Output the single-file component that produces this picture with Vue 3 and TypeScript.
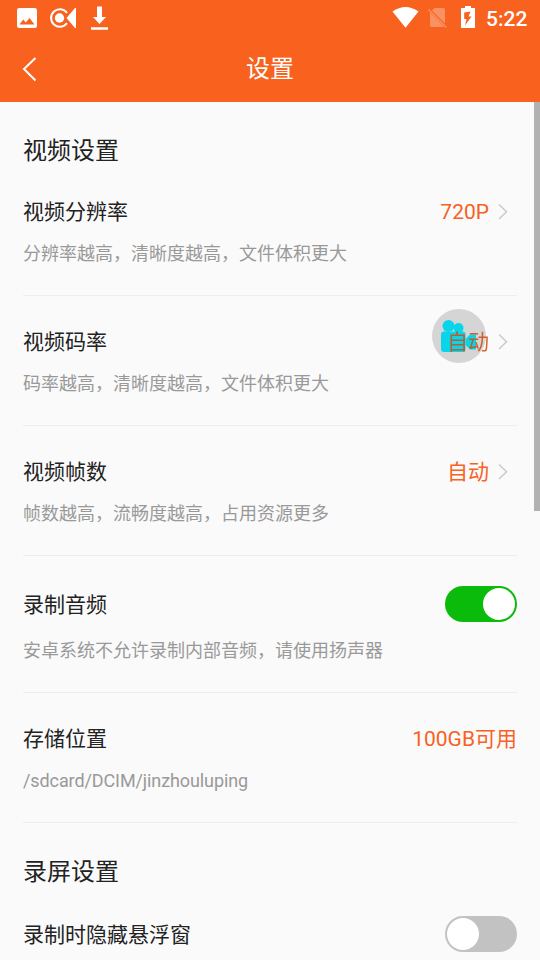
<script setup lang="ts">
interface Row {
  label: string
  hint?: string
  value?: string
  arrow?: boolean
  on?: boolean
  covered?: boolean
  path?: boolean
}
interface Section {
  title: string
  rows: Row[]
}

const sections: Section[] = [
  {
    title: '视频设置',
    rows: [
      { label: '视频分辨率', hint: '分辨率越高，清晰度越高，文件体积更大', value: '720P', arrow: true },
      { label: '视频码率', hint: '码率越高，清晰度越高，文件体积更大', value: '自动', arrow: true, covered: true },
      { label: '视频帧数', hint: '帧数越高，流畅度越高，占用资源更多', value: '自动', arrow: true },
      { label: '录制音频', hint: '安卓系统不允许录制内部音频，请使用扬声器', on: true },
      { label: '存储位置', hint: '/sdcard/DCIM/jinzhouluping', value: '100GB可用', path: true },
    ],
  },
  { title: '录屏设置', rows: [{ label: '录制时隐藏悬浮窗', on: false }] },
]
</script>

<template>
  <div class="screen">
    <header>
      <div class="status">
        <svg class="left-icons" width="120" height="36" viewBox="0 0 120 36" fill="#fff">
          <path fill-rule="evenodd" d="M19.300 8H34.700Q37 8 37 10.300V25.700Q37 28 34.700 28H19.300Q17 28 17 25.700V10.300Q17 8 19.300 8ZM19.500 24.500H34.500L29.500 18L25.800 22.500L23.200 19.500Z" />
          <path d="M67 12.800A8.800 8.800 0 1 0 67 23.200" fill="none" stroke="#fff" stroke-width="2" />
          <circle cx="59.500" cy="18" r="4.700" />
          <path d="M76 8V28H75L66.500 18L75 8Z" />
          <path d="M97 6.500H102V17H106L99.500 24L93 17H97ZM91 27.300H108V29.700H91Z" />
        </svg>
        <svg width="90" height="36" viewBox="390 0 90 36" fill="#fff">
          <path d="M392.500 11.500Q405.500 2.500 418.500 11.500L405.500 27.700Z" />
          <g opacity=".3">
            <path d="M434.500 8H443.500Q445 8 445 9.500V23.500L432 10.500ZM430 12.500L444.500 27H431.500Q430 27 430 25.500Z" />
            <path d="M428.500 9.500L446.500 27.500" stroke="#fff" stroke-width="1.500" />
          </g>
          <path fill-rule="evenodd" d="M465 6H471V8H475V28H461V8H465ZM470.500 11.500L464.200 12.500V19H466.500L465 25.500L471.500 16.500H468.500Z" />
        </svg>
        <span class="clock">5:22</span>
      </div>
      <div class="bar">
        <svg width="20" height="30" viewBox="0 0 20 30"><path d="M15.500 4L4 15L15.500 26.500" fill="none" stroke="#fff" stroke-width="2" /></svg>
        <h1>设置</h1>
      </div>
    </header>
    <main>
      <section v-for="s in sections" :key="s.title">
        <h2>{{ s.title }}</h2>
        <div v-for="r in s.rows" :key="r.label" class="row" :class="{ switchable: r.on !== undefined, short: r.on === false }">
          <div class="line">
            <span class="label">{{ r.label }}</span>
            <span v-if="r.value" class="value" :class="{ covered: r.covered }">{{ r.value }}</span>
            <svg v-if="r.arrow" class="arrow" width="12" height="18" viewBox="0 0 12 18"><path d="M2 1.500L9.500 8.700L2 16" fill="none" stroke="#ccc" stroke-width="1.600" /></svg>
            <span v-if="r.on !== undefined" class="toggle" :class="{ on: r.on }"><i></i></span>
          </div>
          <p v-if="r.hint" :class="{ path: r.path }">{{ r.hint }}</p>
        </div>
      </section>
    </main>
    <div class="scroll"></div>
    <div class="bubble">
      <svg width="54" height="54" viewBox="0 0 54 54" fill="#08d4ea">
        <circle cx="16.500" cy="17" r="6" /><circle cx="26.500" cy="19" r="5" />
        <rect x="9" y="22.500" width="24.500" height="20.500" rx="3" />
        <path d="M33.500 30L38 25.500H44V40.500H38L33.500 36Z" />
      </svg>
    </div>
  </div>
</template>

<style>
body { background: #fafafa; overflow: hidden; }
</style>
<style scoped>
.screen { position: relative; height: 960px; overflow: hidden; background: #fafafa; font-family: Roboto, "Noto Sans CJK SC", sans-serif; color: #222; }
header { height: 102px; background: #f8611e; color: #fff; }
.status { display: flex; height: 36px; align-items: center; }
.left-icons { margin-right: 270px; }
.clock { margin-left: 6px; font-size: 21px; font-weight: 500; line-height: 36px; padding-top: 2px; }
.bar { display: grid; grid-template-columns: 80px 1fr 80px; height: 66px; align-items: center; }
.bar svg { margin-left: 20px; }
h1 { margin: 0; text-align: center; font-size: 24px; font-weight: 400; line-height: 36px; }
main { padding: 0 23px; }
h2 { margin: 0; height: 33px; padding: 31px 0 0; font-size: 24px; font-weight: 400; line-height: 36px; }
.row { box-sizing: border-box; height: 130px; padding-top: 30px; border-bottom: 1px solid #eee; }
.line { display: flex; height: 32px; align-items: center; font-size: 21px; line-height: 32px; }
.label { flex: 1; }
.value { color: #f8611e; }
.covered { position: relative; z-index: 2; color: #cf4d12; opacity: .85; }
.arrow { margin: 0 8px; }
p { margin: 14px 0 0; font-size: 18px; line-height: 24px; color: #999; }
.path { letter-spacing: -.1px; }
.switchable { height: 137px; }
.switchable .line { height: 36px; }
.switchable .label { padding-top: 2px; }
.switchable p { margin-top: 17px; }
.short { padding-top: 29px; }
.toggle { display: flex; box-sizing: border-box; width: 72px; height: 36px; padding: 2px; border-radius: 18px; background: #c2c2c2; }
.toggle.on { background: #0bbb0b; justify-content: flex-end; }
.toggle i { width: 32px; height: 32px; border-radius: 50%; background: #fff; }
.scroll { position: absolute; right: 0; top: 102px; width: 6px; height: 409px; background: #b1b1b1; }
.bubble { position: absolute; z-index: 1; left: 432px; top: 309px; width: 54px; height: 54px; border-radius: 50%; background: #d5d5d5; }
.bubble svg { display: block; filter: blur(.6px); }
</style>
